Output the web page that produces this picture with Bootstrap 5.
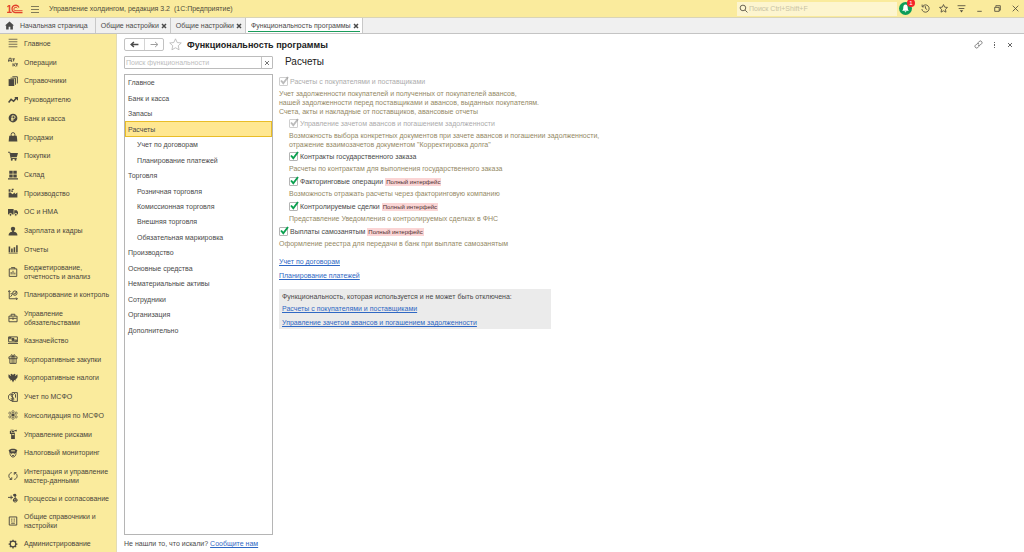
<!DOCTYPE html>
<html lang="ru">
<head>
<meta charset="utf-8">
<meta name="viewport" content="width=device-width, initial-scale=1">
<title>Функциональность программы</title>
<link href="https://cdn.jsdelivr.net/npm/bootstrap@5.3.0/dist/css/bootstrap.min.css" rel="stylesheet">
<style>
  body { font: 7px/9px "Liberation Sans", Arial, sans-serif; color: #4a4a4a; background: #fff; }
  svg { display: block; flex: none; fill: none; stroke: currentColor; stroke-width: 1.5; }
  .solid { fill: currentColor; stroke: none; }
  a { color: #2f68c4; }
  button { border: 0; background: none; padding: 0; color: inherit; line-height: 9px; }
  input { font: inherit; border: 0; outline: 0; background: none; min-width: 0; padding: 0; }
  input::placeholder { color: #bdbdbd; opacity: 1; }
  .titlebar { height: 17px; background: #faeb9d; padding: 0 4px 0 7px; color: #4f4b3c; }
  .app-name { margin-left: 10px; }
  .tools { gap: 9px; }
  .titlebar .global-find { width: 160px; height: 14px; background: #fdf5cf; padding: 0 2px; margin-right: -7px; }
  .titlebar input { padding-left: 1px; }
  .titlebar input::placeholder { color: #c9c3a4; }
  .bell { width: 13px; height: 13px; border-radius: 50%; background: #0c9d58; color: #fff; }
  .bell-count { top: -3px; right: -3px; width: 8px; height: 8px; border-radius: 50%; background: #f5232a; color: #fff; font-size: 6px; line-height: 8px; text-align: center; }
  .tabs { height: 17px; background: #f0f0f0; border-top: 1px solid #d9d4b8; border-bottom: 1px solid #c4c4c4; }
  .tab { border-right: 1px solid #c8c8c8; padding: 0 3px 0 5px; gap: 2px; white-space: nowrap; }
  .tab a { color: inherit; text-decoration: none; }
  .tab.current { background: #fff; position: relative; }
  .tab.current::after { content: ""; position: absolute; left: 2px; right: 2px; bottom: 1px; height: 1px; background: #1a9c5b; }
  .side { width: 117px; background: #faeb9d; border-right: 1px solid #e3dcb4; }
  .side ul { margin-bottom: -1px; }
  .side li { flex: 1 0 auto; display: flex; }
  .side a { display: flex; align-items: center; gap: 6px; padding-left: 8px; color: #4a463c; text-decoration: none; flex: 1; }
  .side svg { width: 10px; height: 10px; color: #4b4840; }
  .main { padding: 4px 6px 4px 7px; }
  .head { height: 13px; }
  .nav-pair { border: 1px solid #c2c2c2; border-radius: 2px; height: 13px; }
  .nav-pair button { width: 19px; display: flex; align-items: center; justify-content: center; }
  .nav-pair button + button { border-left: 1px solid #d4d4d4; color: #8c8c8c; }
  .fav { margin: 0 5px; color: #b4b4b4; }
  .head-tools { gap: 8px; color: #666; padding-right: 5px; }
  h1 { font-size: 9px; line-height: 12px; font-weight: 700; color: #222; margin: 0; }
  h2 { font-size: 10px; line-height: 12px; font-weight: 400; color: #222; margin: 0 0 9px 6px; }
  .pick { width: 149px; }
  .find { height: 13px; border: 1px solid #bcbcbc; border-radius: 1px; }
  .find input { padding-left: 1px; }
  .find button { width: 11px; border-left: 1px solid #c4c4c4; color: #777; }
  .tree-box { border: 1px solid #b5b5b5; margin: 5px 0 4px; }
  .tree { display: grid; grid-auto-rows: 1fr; height: 263px; }
  .tree li { display: flex; align-items: center; padding-left: 3px; }
  .tree .sub { padding-left: 12px; }
  .tree .chosen { background: #ffe791; box-shadow: inset 0 0 0 1px #e9bd27; }
  .opt { display: flex; align-items: center; gap: 2px; height: 9px; margin-bottom: 3px; }
  .opt input { appearance: none; width: 9px; height: 9px; border: 1px solid #b4b4b4; border-radius: 1px; position: relative; flex: none; margin: 0; }
  .opt input:checked::after { content: ""; position: absolute; inset: -2px -2px -1px -1px; background: url("data:image/svg+xml,%3Csvg xmlns='http://www.w3.org/2000/svg' viewBox='0 0 10 10'%3E%3Cpath d='M2 4.500 4.300 7.200 9 1' fill='none' stroke='%230aa04f' stroke-width='1.900'/%3E%3C/svg%3E") center/100% 100% no-repeat; }
  .opt input:disabled { border-color: #cfcfcf; }
  .opt input:disabled::after { filter: grayscale(1); opacity: .5; }
  .opt input:disabled + label { color: #acacac; }
  .note { color: #948966; margin: 0 0 4px; }
  .note.long { margin-bottom: 3px; }
  .inner { margin-left: 10px; }
  .full-ui { background: #fbd5d5; color: #4b3030; font-size: 6px; line-height: 8px; padding: 0 1px; }
  .jump { padding-top: 5px; }
  .used { width: 272px; background: #ebebeb; padding: 3px 3px 2px; margin-top: 9px; }
  .used .jump:nth-child(2) { padding-top: 3px; }
</style>
</head>
<body class="vh-100 d-flex flex-column overflow-hidden">
<header class="titlebar d-flex align-items-center flex-shrink-0">
  <svg width="16" height="10" viewBox="0 0 32 20" style="color:#e2412c" stroke-width="2"><text x="-1" y="17" font-family="Liberation Sans, sans-serif" font-size="20" font-weight="700" fill="#e2412c" stroke="none">1</text><path d="M24 7A7.200 7.200 0 1 0 18 17H31" style="stroke-width:2.500"/><path d="M20.500 8.500A3.500 3.500 0 1 0 18 13.500H31" style="stroke-width:2"/></svg>
  <button aria-label="Меню" class="ms-2"><svg width="8" height="8" viewBox="0 0 8 8" style="stroke-width:1"><path d="M0 1.500h8M0 4.500h8M0 7.500h8" opacity=".7"/></svg></button>
  <span class="app-name flex-fill">Управление холдингом, редакция 3.2&nbsp; (1С:Предприятие)</span>
  <div class="tools d-flex align-items-center">
    <label class="global-find d-flex align-items-center"><svg width="9" height="9" viewBox="0 0 16 16"><circle cx="7" cy="7" r="5"/><path d="m11 11 4 4"/></svg><input class="flex-fill" type="text" placeholder="Поиск Ctrl+Shift+F" aria-label="Поиск"></label>
    <button class="bell position-relative d-flex align-items-center justify-content-center" aria-label="Уведомления"><svg class="solid" width="9" height="9" viewBox="0 0 16 16"><path d="M8 1C5 1 4 4 4 7c0 3-1 4-2 5h12c-1-1-2-2-2-5 0-3-1-6-4-6zM6.500 13h3a1.500 1.500 0 0 1-3 0z"/></svg><span class="bell-count position-absolute">1</span></button>
    <button aria-label="История"><svg width="9" height="9" viewBox="0 0 16 16"><path d="M2.500 4.500A6.500 6.500 0 1 1 1.500 9M2 1v4h4M8 4v4l3 2"/></svg></button>
    <button aria-label="Избранное"><svg width="9" height="9" viewBox="0 0 16 16"><path d="m8 1 2.100 4.600 5 .5-3.700 3.400 1 5L8 12l-4.400 2.500 1-5L.9 6.100l5-.5z"/></svg></button>
    <button aria-label="Настройки"><svg width="9" height="9" viewBox="0 0 16 16"><path d="M1 3h14M3 8h10"/><path class="solid" d="M5 11h6l-3 4z"/></svg></button>
    <button aria-label="Свернуть"><svg width="9" height="9" viewBox="0 0 16 16"><path d="M4 13h8"/></svg></button>
    <button aria-label="Развернуть"><svg width="9" height="9" viewBox="0 0 16 16"><path d="M3 6h8v7H3zM5 5V3h8v8h-2"/></svg></button>
    <button aria-label="Закрыть"><svg width="9" height="9" viewBox="0 0 16 16"><path d="m3 3 10 10M13 3 3 13"/></svg></button>
  </div>
</header>
<nav class="tabs d-flex flex-shrink-0" aria-label="Открытые окна">
  <div class="tab d-flex align-items-center"><svg class="solid" width="9" height="9" viewBox="0 0 16 16"><path d="M8 1 0 8h2v7h4.500v-5h3v5H14V8h2z"/></svg><a href="#" class="ps-1 pe-1">Начальная страница</a></div>
  <div class="tab d-flex align-items-center"><a href="#">Общие настройки</a><button aria-label="Закрыть вкладку"><svg width="6" height="6" viewBox="0 0 6 6"><path d="m1 1 4 4M5 1 1 5"/></svg></button></div>
  <div class="tab d-flex align-items-center"><a href="#">Общие настройки</a><button aria-label="Закрыть вкладку"><svg width="6" height="6" viewBox="0 0 6 6"><path d="m1 1 4 4M5 1 1 5"/></svg></button></div>
  <div class="tab current d-flex align-items-center"><a href="#">Функциональность программы</a><button aria-label="Закрыть вкладку"><svg width="6" height="6" viewBox="0 0 6 6"><path d="m1 1 4 4M5 1 1 5"/></svg></button></div>
</nav>
<div class="d-flex flex-fill" style="min-height:0">
  <nav class="side d-flex flex-column flex-shrink-0" aria-label="Разделы">
    <ul class="list-unstyled d-flex flex-column flex-fill">
      <li><a href="#"><svg viewBox="0 0 16 16"><path d="M1 2h14M1 6h14M1 10h14M1 14h14" opacity=".8"/></svg>Главное</a></li>
      <li><a href="#"><svg viewBox="0 0 16 16"><path d="M0 8V6h6v2M1 6l1-4h3v4M7 3h4M9 3v4M8 10v5M12 10l-3 2.500 3 2.500M12 11h4M14 11v4"/></svg>Операции</a></li>
      <li><a href="#"><svg viewBox="0 0 16 16"><path class="solid" d="M1 5h9v11H1z"/><path d="M4 3.500h8V14M7 1.200h8V12"/></svg>Справочники</a></li>
      <li><a href="#"><svg viewBox="0 0 16 16"><path d="m1 12 4-5 4 3 5-6" style="stroke-width:2.500"/><path class="solid" d="M10 3h6v6z"/></svg>Руководителю</a></li>
      <li><a href="#"><svg viewBox="0 0 16 16"><circle class="solid" cx="8" cy="8" r="7"/><path d="M6.500 13V4.500H9a2 2 0 0 1 0 4.500H5M5 11h4" stroke="#faeb9d"/></svg>Банк и касса</a></li>
      <li><a href="#"><svg viewBox="0 0 16 16"><path class="solid" d="M2 6h12l1 9H1z"/><path d="M5 8V4a3 3 0 0 1 6 0v4"/></svg>Продажи</a></li>
      <li><a href="#"><svg viewBox="0 0 16 16"><path class="solid" d="M3 3h13l-2 7H5z"/><path d="M0 2h3l2 10h9"/><circle class="solid" cx="6" cy="14" r="1.600"/><circle class="solid" cx="12" cy="14" r="1.600"/></svg>Покупки</a></li>
      <li><a href="#"><svg viewBox="0 0 16 16"><path class="solid" d="M2 1h5.500v5H2zM8.500 1H14v5H8.500zM2 7h5.500v5H2zM8.500 7H14v5H8.500zM0 13h16v2H0z"/></svg>Склад</a></li>
      <li><a href="#"><svg viewBox="0 0 16 16"><path class="solid" d="M1 15V7h3l3 3 4-3v3l4-3v8zM1 2h3v4H1zM6 1h3v2H6zM5 4h3v2H5z"/></svg>Производство</a></li>
      <li><a href="#"><svg viewBox="0 0 16 16"><path class="solid" d="M0 3h9v9H0zM10 5h4l2 3v4h-6z"/><g fill="currentColor" stroke="#faeb9d"><circle cx="4" cy="12.500" r="2.200"/><circle cx="12.500" cy="12.500" r="2.200"/></g></svg>ОС и НМА</a></li>
      <li><a href="#"><svg class="solid" viewBox="0 0 16 16"><circle cx="8" cy="4.500" r="3.500"/><path d="M6.500 7h3v2c3 .5 5.500 2 5.500 5v1H1v-1c0-3 2.500-4.500 5.500-5z"/></svg>Зарплата и кадры</a></li>
      <li><a href="#"><svg class="solid" viewBox="0 0 16 16"><path d="M1 4h2.500v9H1zM5 7h2.500v6H5zM9 5h2.500v8H9zM13 2h2.500v11H13zM1 14h14.500v1H1z"/></svg>Отчеты</a></li>
      <li><a href="#"><svg viewBox="0 0 16 16"><path d="M2 3h12v12H2zM5 12V8M8 12V6M11 12V9M5 1h6v2"/></svg><span>Бюджетирование,<br>отчетность и анализ</span></a></li>
      <li><a href="#"><svg viewBox="0 0 16 16"><path d="M2 1v13h13M0 3l2-2 2 2M13 12l2 2-2 2M4 11l3-4M4 6h3"/><circle cx="11" cy="5" r="3.500"/><path d="m9 5 2 1.500L14 2"/></svg>Планирование и контроль</a></li>
      <li><a href="#"><svg viewBox="0 0 16 16"><path d="M1.500 5h13v9h-13zM5 5V2h6v3M2 8.500h12M8 7v4"/></svg><span>Управление<br>обязательствами</span></a></li>
      <li><a href="#"><svg viewBox="0 0 16 16"><path d="M1 3h14v8H1zM0 13.500h16"/><path d="M2 4h3v2H2zM11 8h3v2h-3z"/><circle class="solid" cx="8" cy="7" r="2.500"/></svg>Казначейство</a></li>
      <li><a href="#"><svg viewBox="0 0 16 16"><path d="M1.500 4.500h13v3h-13zM3 7.500V15h10V7.500M6.500 5v10M9.500 5v10M8 4C6 4 4 3 5 1.500S8 2 8 4c0-2 2-4 3-2.500S10 4 8 4"/></svg>Корпоративные закупки</a></li>
      <li><a href="#"><svg class="solid" viewBox="0 0 16 16"><path d="M8 3 6 1 4 2l1 3-4-3c-1 4 0 7 3 8l-1 2 3-1 2 4 2-4 3 1-1-2c3-1 4-4 3-8l-4 3 1-3-2-1z"/></svg>Корпоративные налоги</a></li>
      <li><a href="#"><svg viewBox="0 0 16 16"><path d="M6 1h9v14H6M7 3a5.500 5.500 0 1 0 3 9"/><path d="M7 4v8M9 5a2 2 0 0 0-4 1c0 2 4 2 4 4a2 2 0 0 1-4 0M9 1l3 3v5"/></svg>Учет по МСФО</a></li>
      <li><a href="#"><svg viewBox="0 0 16 16"><g style="stroke-width:1"><circle class="solid" cx="8" cy="8" r="2"/><circle cx="8" cy="2.800" r="1.800"/><circle cx="8" cy="13.200" r="1.800"/><circle cx="3" cy="5" r="1.800"/><circle cx="13" cy="5" r="1.800"/><circle cx="3" cy="11" r="1.800"/><circle cx="13" cy="11" r="1.800"/><path d="M8 4v8M4 6l8 4M12 6l-8 4"/></g></svg>Консолидация по МСФО</a></li>
      <li><a href="#"><svg class="solid" viewBox="0 0 16 16"><path d="M5 6h6v10H5zM6 3h4v2H6zM4 1h5v1.500H4zM10 2l4-1v3l-4-1zM3 3h2v5H3z"/><path d="M6 9h4" stroke="#faeb9d"/></svg>Управление рисками</a></li>
      <li><a href="#"><svg viewBox="0 0 16 16"><path class="solid" d="M1 4c2-4 12-4 14 0l-2 4H3z"/><path d="M3 7c0 10 10 10 10 0M5 9h2M9 9h2M6.500 12h3"/><path d="M5 4.500h6" stroke="#faeb9d"/></svg>Налоговый мониторинг</a></li>
      <li><a href="#"><svg viewBox="0 0 16 16"><path d="M6 2.500C0 4 0 11 5 13M10 13.500C16 12 16 5 11 3M2.500 13.500H6V10M13.500 2.500H10V6"/></svg><span>Интеграция и управление<br>мастер-данными</span></a></li>
      <li><a href="#"><svg viewBox="0 0 16 16"><path d="M0 7h8M5 4v6M8 3h3M8 12h2"/><circle class="solid" cx="11" cy="3.500" r="2.300"/><circle cx="11.500" cy="11.500" r="3"/><path d="M11.500 5v8M8 11.500h7"/></svg>Процессы и согласование</a></li>
      <li><a href="#"><svg viewBox="0 0 16 16"><path d="M2 1.500h12v13H2zM5 5h2M9 5h2M5 8h2M9 8h2M5 11.500h6"/></svg><span>Общие справочники и<br>настройки</span></a></li>
      <li><a href="#"><svg viewBox="0 0 16 16"><circle cx="8" cy="8" r="4.500" style="stroke-width:2"/><path d="M8 1v3M8 12v3M1 8h3M12 8h3M3 3l2 2M11 11l2 2M13 3l-2 2M5 11l-2 2" style="stroke-width:2"/></svg>Администрирование</a></li>
    </ul>
  </nav>
  <main class="main flex-fill d-flex flex-column" style="min-width:0">
    <div class="head d-flex align-items-center flex-shrink-0">
      <div class="nav-pair d-flex"><button aria-label="Назад"><svg width="9" height="9" viewBox="0 0 16 16"><path d="M15 8H3M7 3.500 2 8l5 4.500" style="stroke-width:2.500"/></svg></button><button aria-label="Вперед"><svg width="9" height="9" viewBox="0 0 16 16"><path d="M1 8h12M9 3.500 14 8l-5 4.500"/></svg></button></div>
      <button class="fav" aria-label="В избранное"><svg width="13" height="13" viewBox="0 0 16 16"><path d="m8 1 2.100 4.600 5 .5-3.700 3.400 1 5L8 12l-4.400 2.500 1-5L.9 6.100l5-.5z" style="stroke-width:1"/></svg></button>
      <h1 class="flex-fill">Функциональность программы</h1>
      <div class="head-tools d-flex align-items-center"><button aria-label="Ссылка"><svg width="9" height="9" viewBox="0 0 16 16"><path d="M7 5l3-3a3 3 0 0 1 4 4l-3 3a3 3 0 0 1-4 0M9 11l-3 3a3 3 0 0 1-4-4l3-3a3 3 0 0 1 4 0"/></svg></button><button aria-label="Ещё"><svg class="solid" width="8" height="6" viewBox="0 0 8 6"><path d="M3 0h1v1H3zM3 2h1v2H3zM3 5h1v1H3z"/></svg></button><button aria-label="Закрыть"><svg width="6" height="6" viewBox="0 0 6 6"><path d="m1 1 4 4M5 1 1 5" style="stroke-width:1"/></svg></button></div>
    </div>
    <div class="d-flex flex-fill" style="min-height:0;gap:6px;padding-top:5px">
      <section class="pick d-flex flex-column flex-shrink-0">
        <div class="find d-flex flex-shrink-0"><input class="flex-fill" type="text" placeholder="Поиск функциональности" aria-label="Поиск функциональности"><button aria-label="Очистить" class="d-flex align-items-center justify-content-center"><svg width="4" height="4" viewBox="0 0 4 4"><path d="m0 0 4 4M4 0 0 4" style="stroke-width:1"/></svg></button></div>
        <div class="tree-box flex-fill">
          <ul class="tree list-unstyled mb-0">
            <li>Главное</li><li>Банк и касса</li><li>Запасы</li><li class="chosen">Расчеты</li><li class="sub">Учет по договорам</li><li class="sub">Планирование платежей</li><li>Торговля</li><li class="sub">Розничная торговля</li><li class="sub">Комиссионная торговля</li><li class="sub">Внешняя торговля</li><li class="sub">Обязательная маркировка</li><li>Производство</li><li>Основные средства</li><li>Нематериальные активы</li><li>Сотрудники</li><li>Организация</li><li>Дополнительно</li>
          </ul>
        </div>
        <div>Не нашли то, что искали? <a href="#">Сообщите нам</a></div>
      </section>
      <section class="flex-fill">
        <h2>Расчеты</h2>
        <div class="opt"><input type="checkbox" id="o1" checked disabled><label for="o1">Расчеты с покупателями и поставщиками</label></div>
        <p class="note long">Учет задолженности покупателей и полученных от покупателей авансов,<br>нашей задолженности перед поставщиками и авансов, выданных покупателям.<br>Счета, акты и накладные от поставщиков, авансовые отчеты</p>
        <div class="inner">
          <div class="opt"><input type="checkbox" id="o2" checked disabled><label for="o2">Управление зачетом авансов и погашением задолженности</label></div>
          <p class="note long">Возможность выбора конкретных документов при зачете авансов и погашении задолженности,<br>отражение взаимозачетов документом "Корректировка долга"</p>
          <div class="opt"><input type="checkbox" id="o3" checked><label for="o3">Контракты государственного заказа</label></div>
          <p class="note">Расчеты по контрактам для выполнения государственного заказа</p>
          <div class="opt"><input type="checkbox" id="o4" checked><label for="o4">Факторинговые операции</label><span class="full-ui">Полный интерфейс</span></div>
          <p class="note">Возможность отражать расчеты через факторинговую компанию</p>
          <div class="opt"><input type="checkbox" id="o5" checked><label for="o5">Контролируемые сделки</label><span class="full-ui">Полный интерфейс</span></div>
          <p class="note">Представление Уведомления о контролируемых сделках в ФНС</p>
        </div>
        <div class="opt"><input type="checkbox" id="o6" checked><label for="o6">Выплаты самозанятым</label><span class="full-ui">Полный интерфейс</span></div>
        <p class="note">Оформление реестра для передачи в банк при выплате самозанятым</p>
        <div class="jump"><a href="#">Учет по договорам</a></div>
        <div class="jump"><a href="#">Планирование платежей</a></div>
        <div class="used">
          <div>Функциональность, которая используется и не может быть отключена:</div>
          <div class="jump"><a href="#">Расчеты с покупателями и поставщиками</a></div>
          <div class="jump"><a href="#">Управление зачетом авансов и погашением задолженности</a></div>
        </div>
      </section>
    </div>
  </main>
</div>
<script src="https://cdn.jsdelivr.net/npm/bootstrap@5.3.0/dist/js/bootstrap.bundle.min.js"></script>
</body>
</html>
